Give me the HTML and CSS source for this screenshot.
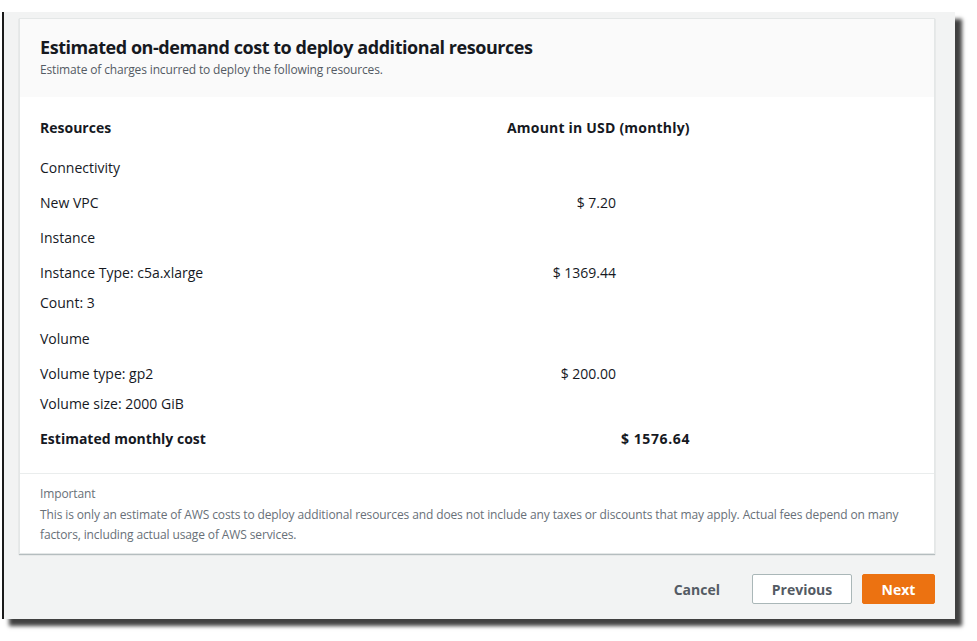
FILE: index.html
```html
<!DOCTYPE html>
<html lang="en">
<head>
<meta charset="utf-8">
<title>Estimated on-demand cost</title>
<link rel="stylesheet" href="styles.css">
</head>
<body>
<div class="paper">
  <section class="card">
    <header class="card-header">
      <h2 class="title">Estimated on-demand cost to deploy additional resources</h2>
      <p class="subtitle">Estimate of charges incurred to deploy the following resources.</p>
    </header>
    <div class="card-body">
      <div class="row head"><span>Resources</span><span class="amt-head">Amount in USD (monthly)</span></div>
      <div class="row first"><span>Connectivity</span><span></span></div>
      <div class="row"><span>New VPC</span><span class="amt">$ 7.20</span></div>
      <div class="row"><span>Instance</span><span></span></div>
      <div class="row"><span>Instance Type: c5a.xlarge</span><span class="amt">$ 1369.44</span></div>
      <div class="row cont"><span>Count: 3</span><span></span></div>
      <div class="row gap"><span>Volume</span><span></span></div>
      <div class="row"><span>Volume type: gp2</span><span class="amt">$ 200.00</span></div>
      <div class="row cont"><span>Volume size: 2000 GiB</span><span></span></div>
      <div class="row total"><span>Estimated monthly cost</span><span class="amt-total">$ 1576.64</span></div>
    </div>
    <footer class="card-footer">
      <div class="note-title">Important</div>
      <p class="note">This is only an estimate of AWS costs to deploy additional resources and does not include any taxes or discounts that may apply. Actual fees depend on many factors, including actual usage of AWS services.</p>
    </footer>
  </section>
  <div class="actions">
    <button class="btn btn-link">Cancel</button>
    <button class="btn btn-normal">Previous</button>
    <button class="btn btn-primary">Next</button>
  </div>
</div>
</body>
</html>
```

FILE: styles.css
```css
html, body {
  margin: 0;
  padding: 0;
  background: #ffffff;
}
body {
  font-family: "Open Sans", "Noto Sans", "Liberation Sans", sans-serif;
  color: #16191f;
  width: 977px;
  height: 641px;
  overflow: hidden;
}
.paper {
  margin: 12px 0 0 2px;
  width: 936px;
  height: 592px;
  padding: 6px 0 9px 15px;
  background: #f2f3f3;
  border-left: 2px solid #1a1a1a;
  box-shadow: 7px 7px 4px rgba(0, 0, 0, 0.75);
  display: flex;
  flex-direction: column;
}
.card {
  width: 914px;
  background: #ffffff;
  border: 1px solid #e4e7e7;
  box-shadow: 0 1px 1px rgba(0, 28, 36, 0.25);
}
.card-header {
  background: #fafafa;
  padding: 16px 20px 19px 20px;
}
.title {
  margin: 0 0 3px 0;
  font-size: 18px;
  line-height: 24px;
  font-weight: 700;
  letter-spacing: -0.45px;
  color: #16191f;
}
.subtitle {
  margin: 0;
  font-size: 12px;
  line-height: 16px;
  letter-spacing: -0.15px;
  color: #545b64;
}
.card-body {
  padding: 21px 20px 24px 20px;
  font-size: 14px;
  line-height: 20px;
}
.row {
  display: grid;
  grid-template-columns: 467px 183px;
  margin-top: 15px;
  white-space: nowrap;
}
.row.head {
  margin-top: 0;
  font-weight: 700;
}
.row.first {
  margin-top: 20px;
}
.row.cont {
  margin-top: 10px;
}
.row.gap {
  margin-top: 16px;
}
.row.total {
  font-weight: 700;
}
.amt-head {
  letter-spacing: 0.2px;
}
.amt {
  text-align: right;
  padding-right: 74px;
}
.amt-total {
  text-align: right;
  letter-spacing: 0.6px;
}
.card-footer {
  border-top: 1px solid #eaeded;
  padding: 10px 20px 8px 20px;
  font-size: 12px;
  line-height: 20px;
  letter-spacing: -0.12px;
  color: #687078;
}
.note-title {
  margin-bottom: 1px;
}
.note {
  margin: 0;
}
.actions {
  display: flex;
  justify-content: flex-end;
  align-items: center;
  gap: 10px;
  margin-top: 20px;
  width: 916px;
}
.btn {
  font-family: inherit;
  font-size: 14px;
  font-weight: 700;
  height: 30px;
  padding: 0 16px;
  border-radius: 2px;
  cursor: pointer;
}
.btn-link {
  background: transparent;
  border: 1px solid transparent;
  color: #545b64;
  margin-right: 5px;
}
.btn-normal {
  background: #ffffff;
  border: 1px solid #aab7b8;
  color: #545b64;
  width: 100px;
}
.btn-primary {
  background: #ec7211;
  border: 1px solid #ec7211;
  color: #ffffff;
  width: 73px;
}
```
